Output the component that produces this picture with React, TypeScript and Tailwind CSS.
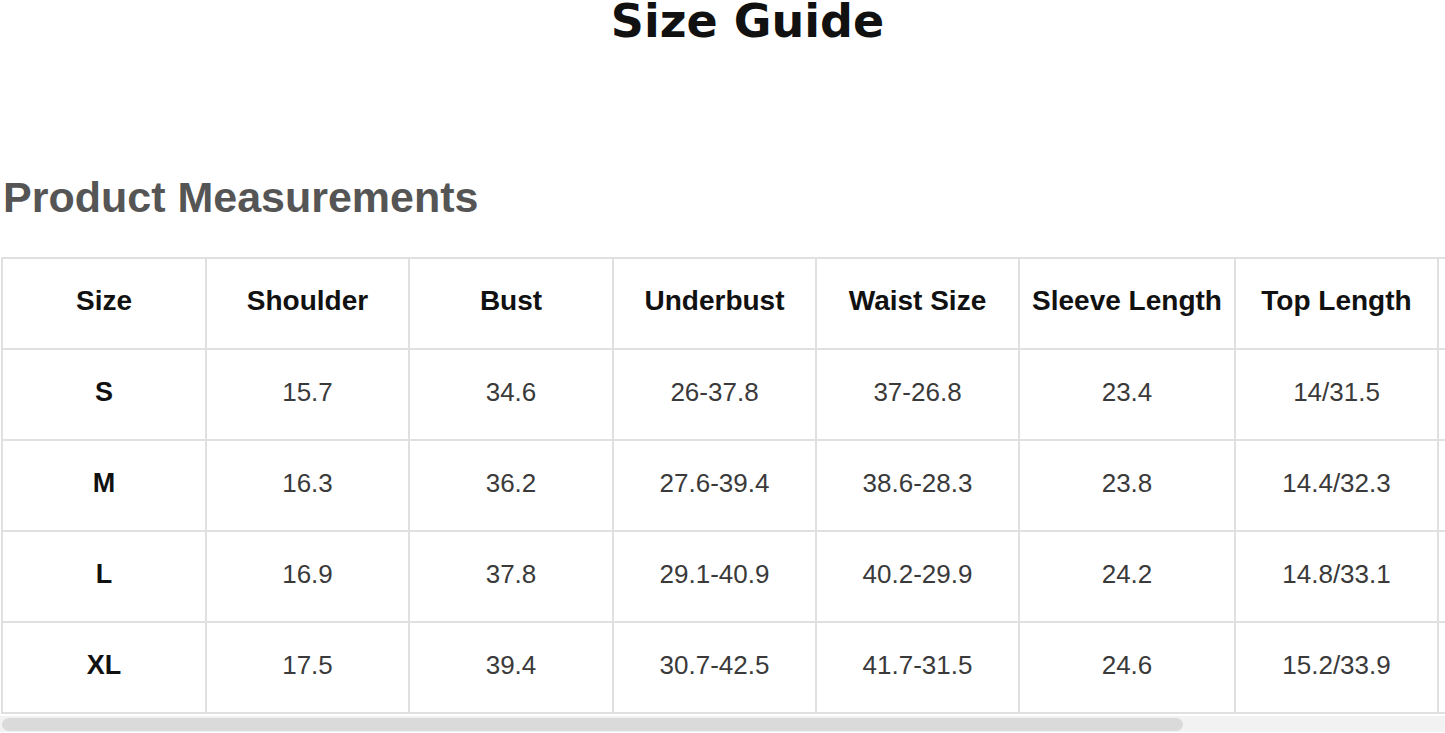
import React from 'react';

const headers = ['Size', 'Shoulder', 'Bust', 'Underbust', 'Waist Size', 'Sleeve Length', 'Top Length', 'Hip'];

const rows = [
  ['S', '15.7', '34.6', '26-37.8', '37-26.8', '23.4', '14/31.5', '36.2'],
  ['M', '16.3', '36.2', '27.6-39.4', '38.6-28.3', '23.8', '14.4/32.3', '37.8'],
  ['L', '16.9', '37.8', '29.1-40.9', '40.2-29.9', '24.2', '14.8/33.1', '39.4'],
  ['XL', '17.5', '39.4', '30.7-42.5', '41.7-31.5', '24.6', '15.2/33.9', '40.9'],
];

const colWidths = ['w-[204px]', 'w-[203px]', 'w-[204px]', 'w-[203px]', 'w-[203px]', 'w-[216px]', 'w-[203px]', 'w-[322px]'];

const App: React.FC = () => {
  return (
    <div className="w-[1445px] h-[733px] overflow-hidden bg-white">
      {/* Title */}
      <h1 className="pl-[50px] text-center text-[46px] leading-[42px] font-bold text-[#111] font-['DejaVu_Sans',sans-serif]">
        Size Guide
      </h1>

      {/* Section heading */}
      <h2 className="mt-[131px] pl-[3px] text-[43px] leading-[48px] font-bold text-[#555] font-['Liberation_Sans',Arial,sans-serif]">
        Product Measurements
      </h2>

      {/* Table, scrolled horizontally */}
      <div className="mt-[36px] overflow-hidden">
        <table className="ml-[1px] w-[1760px] table-fixed border-collapse font-['Liberation_Sans',Arial,sans-serif]">
          <thead>
            <tr>
              {headers.map((h, i) => (
                <th
                  key={h}
                  className={`${colWidths[i]} h-[91px] pb-[5px] border-2 border-[#e0e0e0] text-center align-middle text-[28px] font-bold text-[#111] whitespace-nowrap`}
                >
                  {i < 7 ? h : ''}
                </th>
              ))}
            </tr>
          </thead>
          <tbody>
            {rows.map((r) => (
              <tr key={r[0]}>
                {r.map((c, i) => (
                  <td
                    key={i}
                    className={
                      i === 0
                        ? 'h-[91px] pb-[4px] border-2 border-[#e0e0e0] text-center align-middle text-[27px] font-bold text-[#111]'
                        : 'h-[91px] pb-[4px] border-2 border-[#e0e0e0] text-center align-middle text-[26px] text-[#3a3a3a]'
                    }
                  >
                    {i < 7 ? c : ''}
                  </td>
                ))}
              </tr>
            ))}
          </tbody>
        </table>
      </div>

      {/* Scrollbar */}
      <div className="mt-[2px] h-[16px] bg-[#f2f2f2] flex items-center">
        <div className="ml-[2px] w-[1181px] h-[13px] rounded-full bg-[#dadada]" />
      </div>
    </div>
  );
};

export default App;
